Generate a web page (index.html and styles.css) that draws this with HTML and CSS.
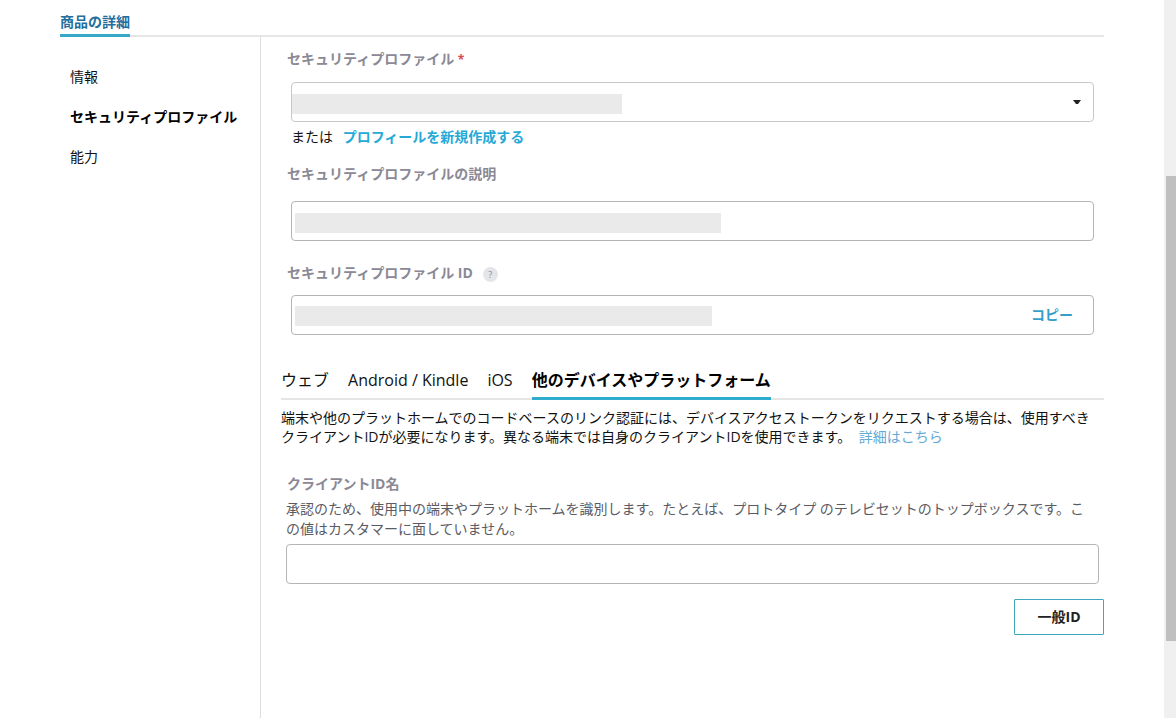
FILE: index.html
```html
<!DOCTYPE html>
<html lang="ja">
<head>
<meta charset="utf-8">
<title>セキュリティプロファイル</title>
<meta name="viewport" content="width=device-width, initial-scale=1">
<link rel="stylesheet" href="styles.css">
</head>
<body>
<div class="page">
  <header class="topbar">
    <a class="topbar-tab" href="#details">商品の詳細</a>
  </header>
  <div class="columns">
    <nav class="sidebar">
      <a href="#info">情報</a>
      <a class="current" href="#security">セキュリティプロファイル</a>
      <a href="#capabilities">能力</a>
    </nav>
    <main class="content">
      <form class="profile">
        <label class="label" for="profile">セキュリティプロファイル <span class="required">*</span></label>
        <div class="select-wrap">
          <select class="control masked masked-select" id="profile"><option></option></select>
          <svg class="caret" viewBox="0 0 8 4" aria-hidden="true"><path d="M0 0h8L5 4H3z"/></svg>
        </div>
        <p class="alternative">または <a href="#new">プロフィールを新規作成する</a></p>
        <label class="label description-label" for="description">セキュリティプロファイルの説明</label>
        <input class="control masked masked-description" id="description" type="text" readonly>
        <div class="label-row">
          <label class="label" for="profile-id">セキュリティプロファイル ID</label>
          <button class="help" type="button" aria-label="ヘルプ">?</button>
        </div>
        <div class="control copy-field">
          <input class="copy-input masked masked-id" id="profile-id" type="text" readonly>
          <button class="copy" type="button">コピー</button>
        </div>
      </form>
      <nav class="platforms">
        <a href="#web">ウェブ</a>
        <a href="#android">Android / Kindle</a>
        <a href="#ios">iOS</a>
        <a class="current" href="#other">他のデバイスやプラットフォーム</a>
      </nav>
      <p class="intro">端末や他のプラットホームでのコードベースのリンク認証には、デバイスアクセストークンをリクエストする場合は、使用すべきクライアントIDが必要になります。異なる端末では自身のクライアントIDを使用できます。 <a href="#more">詳細はこちら</a></p>
      <form class="client">
        <label class="label" for="client-name">クライアントID名</label>
        <p class="hint">承認のため、使用中の端末やプラットホームを識別します。たとえば、プロトタイプ のテレビセットのトップボックスです。この値はカスタマーに面していません。</p>
        <input class="control" id="client-name" type="text">
      </form>
      <div class="actions"><button class="generate" type="button">一般ID</button></div>
    </main>
  </div>
</div>
<div class="scroll-track" aria-hidden="true"><div class="scroll-thumb"></div></div>
</body>
</html>
```

FILE: styles.css
```css
* { box-sizing: border-box; }

body {
  display: flex;
  min-height: 100vh;
  margin: 0;
  background: #fff;
  color: #111;
  font: 14px/20px "Open Sans", "Noto Sans CJK JP", sans-serif;
}

p { margin: 0; }
a { color: inherit; text-decoration: none; }
button, input, select { font: inherit; }
button { padding: 0; border: 0; background: none; cursor: pointer; }

.page {
  display: flex;
  flex: 1;
  flex-direction: column;
  min-width: 0;
  padding: 0 60px;
}

.topbar {
  display: flex;
  padding-top: 12px;
  box-shadow: inset 0 -2px #e5e5e5;
}
.topbar-tab {
  padding-bottom: 2px;
  border-bottom: 3px solid #36a9c9;
  color: #246f9d;
  font-weight: bold;
}

.columns { display: flex; flex: 1; }
.sidebar {
  display: flex;
  flex: 0 0 201px;
  flex-direction: column;
  padding: 20px 10px;
  border-right: 1px solid #ddd;
  line-height: 40px;
}
.sidebar .current { color: #000; font-weight: bold; white-space: nowrap; }

.content { flex: 1; min-width: 0; padding: 12px 0 20px 20px; }

.profile { display: flex; flex-direction: column; padding: 0 10px; }
.label { margin-left: -4px; color: #8b8995; font-weight: bold; }
.required { color: #dc4b4b; font-size: 12px; line-height: 1; }

.control {
  display: block;
  width: 100%;
  height: 40px;
  padding: 0 12px;
  border: 1px solid #b5b5b5;
  border-radius: 4px;
  background-color: #fff;
}
.masked {
  background-image: linear-gradient(#eaeaea, #eaeaea);
  background-repeat: no-repeat;
}
.select-wrap { position: relative; margin-top: 13px; }
.masked-select {
  border-color: #c8c8c8;
  background-position: 0 11px;
  background-size: 330px 20px;
  appearance: none;
}
.masked-description {
  margin-top: 17px;
  background-position: 3px 11px;
  background-size: 426px 20px;
}
.caret {
  position: absolute;
  top: 18px;
  right: 13px;
  width: 8px;
  height: 4px;
  fill: #222;
  pointer-events: none;
}

.alternative { margin-top: 5px; }
.alternative a { margin-left: 6px; color: #26a9d6; font-weight: bold; }
.description-label { margin-top: 17px; }
.label-row { display: flex; align-items: center; gap: 10px; margin-top: 22px; }
.help {
  width: 15px;
  height: 15px;
  margin-top: 2px;
  border-radius: 50%;
  background: #e3e5e8;
  color: #8b8995;
  font-size: 9px;
  line-height: 15px;
}
.copy-field { display: flex; margin-top: 12px; padding: 0 20px 0 0; }
.copy-input {
  flex: 1;
  min-width: 0;
  padding: 0 12px;
  border: 0;
  border-radius: 4px;
  background-color: transparent;
  background-position: 3px 10px;
  background-size: 417px 20px;
}
.copy { color: #369fc9; font-weight: bold; }

.platforms {
  display: flex;
  gap: 19px;
  margin-top: 35px;
  box-shadow: inset 0 -2px #e5e5e5;
  font-size: 16px;
}
.platforms a { padding-bottom: 7px; border-bottom: 3px solid transparent; }
.platforms .current { border-color: #2fabcb; color: #000; font-weight: bold; }

.intro { margin-top: 8px; padding-right: 10px; line-height: 19px; }
.intro a { margin-left: 4px; color: #65a9d5; }

.client { margin-top: 28px; padding: 0 5px; }
.client .label { display: block; margin-left: 1px; }
.hint { margin: 5px 0; padding-right: 10px; color: #5b5b63; }
.actions { display: flex; justify-content: flex-end; margin-top: 15px; }
.generate {
  width: 90px;
  height: 36px;
  border: 1px solid #40a5bf;
  border-radius: 1px;
  color: #222;
  font-weight: bold;
}

.scroll-track {
  display: flex;
  flex: 0 0 12px;
  flex-direction: column;
  padding-left: 2px;
  background: #f0f0f0;
}
.scroll-track::before { flex: 176; content: ""; }
.scroll-track::after { flex: 77; content: ""; }
.scroll-thumb { flex: 465; background: #bfbfbf; }
```
